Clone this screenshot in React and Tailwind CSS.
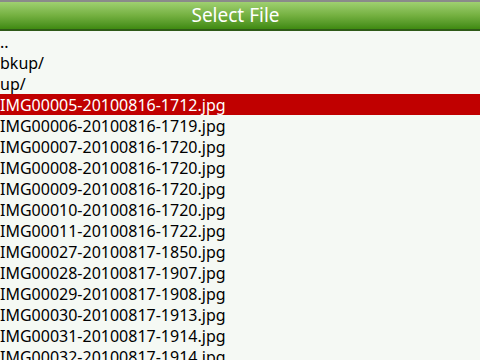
import React from "react";

const files = [
  "..",
  "bkup/",
  "up/",
  "IMG00005-20100816-1712.jpg",
  "IMG00006-20100816-1719.jpg",
  "IMG00007-20100816-1720.jpg",
  "IMG00008-20100816-1720.jpg",
  "IMG00009-20100816-1720.jpg",
  "IMG00010-20100816-1720.jpg",
  "IMG00011-20100816-1722.jpg",
  "IMG00027-20100817-1850.jpg",
  "IMG00028-20100817-1907.jpg",
  "IMG00029-20100817-1908.jpg",
  "IMG00030-20100817-1913.jpg",
  "IMG00031-20100817-1914.jpg",
  "IMG00032-20100817-1914.jpg",
];

export default function App() {
  const selected = 3;
  return (
    <div className="w-[480px] h-[360px] overflow-hidden bg-[#f5f9f4] font-['Noto_Sans',sans-serif]">
      {/* Title bar */}
      <div className="h-[31px] border-t-2 border-t-[#8a8a8a] border-b-2 border-b-[#2f5a18] bg-gradient-to-b from-[#9fd070] via-[#74b040] to-[#3f8a10] flex items-center justify-center pr-[9px]">
        <span className="text-white text-[19px] leading-none">Select File</span>
      </div>
      <ul>
        {files.map((f, i) => (
          <li
            key={f}
            className={
              i === selected
                ? "h-[21px] flex items-center bg-[#c00000] text-white text-[16px] leading-none whitespace-nowrap"
                : "h-[21px] flex items-center text-black text-[16px] leading-none whitespace-nowrap"
            }
          >
            {f}
          </li>
        ))}
      </ul>
    </div>
  );
}
